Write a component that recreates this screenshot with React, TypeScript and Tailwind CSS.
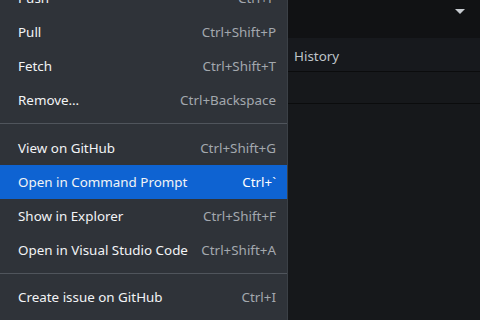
import React from 'react';

const top = [
  { label: 'Push', key: 'Ctrl+P' },
  { label: 'Pull', key: 'Ctrl+Shift+P' },
  { label: 'Fetch', key: 'Ctrl+Shift+T' },
  { label: 'Remove…', key: 'Ctrl+Backspace' },
];

const middle = [
  { label: 'View on GitHub', key: 'Ctrl+Shift+G' },
  { label: 'Open in Command Prompt', key: 'Ctrl+`', active: true },
  { label: 'Show in Explorer', key: 'Ctrl+Shift+F' },
  { label: 'Open in Visual Studio Code', key: 'Ctrl+Shift+A' },
];

const bottom = [{ label: 'Create issue on GitHub', key: 'Ctrl+I' }];

type Item = { label: string; key: string; active?: boolean };

function Row({ item }: { item: Item }) {
  return (
    <div
      className={`flex h-[34px] items-center justify-between pl-[18px] pr-[11px] pt-px ${
        item.active ? 'bg-[#0e63d2]' : ''
      }`}
    >
      <span className="text-[#f2f4f6]">{item.label}</span>
      <span className={item.active ? 'text-white' : 'text-[#a3a8ae]'}>{item.key}</span>
    </div>
  );
}

function Separator() {
  return (
    <div className="flex h-3 items-center">
      <div className="h-px w-full bg-[#50555c]" />
    </div>
  );
}

export default function App() {
  return (
    <div
      className="relative h-[320px] w-[480px] overflow-hidden bg-[#16181b] text-[13.4px]"
      style={{ fontFamily: '"Noto Sans", "Open Sans", sans-serif' }}
    >
      {/* app behind the menu */}
      <div className="flex h-[38px] items-start justify-end bg-[#111214] pr-[14px] pt-[8px]">
        <svg width="12" height="8" viewBox="0 0 12 8">
          <path d="M1 1h10L6 6z" fill="#c7cbd0" />
        </svg>
      </div>
      <div className="flex h-[34px] items-center border-b border-[#0b0c0d] bg-[#17191d] pl-[294px] pt-[3px] text-[#bfc4c9]">
        History
      </div>
      <div className="h-[32px] border-b border-[#0b0c0d] bg-[#16181b]" />

      {/* menu */}
      <div className="absolute left-0 top-[-19px] w-[287px] bg-[#2f3339] shadow-[1px_0_0_#3b4046]">
        {top.map((i) => (
          <Row key={i.label} item={i} />
        ))}
        <Separator />
        <div className="h-0.5" />
        {middle.map((i) => (
          <Row key={i.label} item={i} />
        ))}
        <Separator />
        <div className="h-px" />
        {bottom.map((i) => (
          <Row key={i.label} item={i} />
        ))}
        <div className="h-2" />
      </div>
    </div>
  );
}
